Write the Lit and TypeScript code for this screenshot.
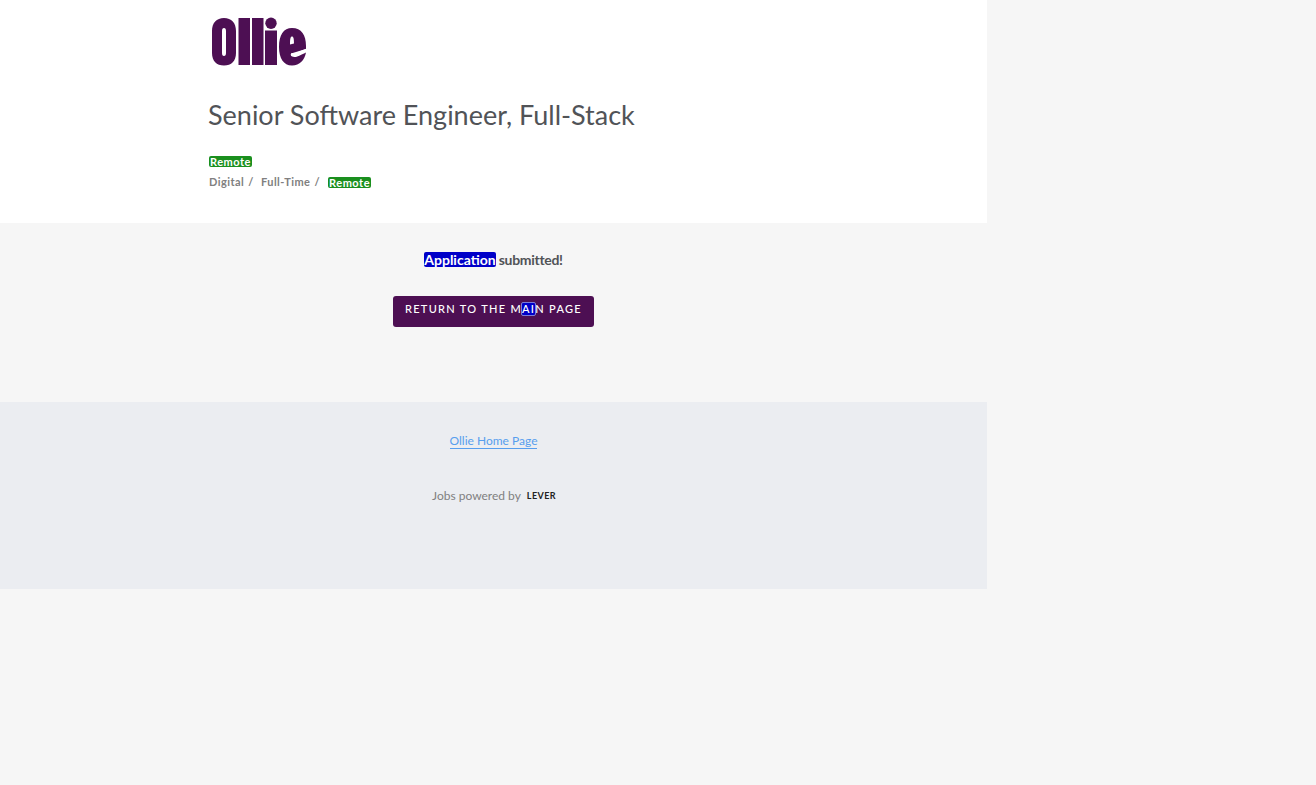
import { LitElement, html, css, svg } from 'lit';
import { customElement } from 'lit/decorators.js';

// logo letters are drawn in page pixels, offset from the svg's corner at (212, 16)
const LOGO = svg`
  <path fill="#4d0f53" fill-rule="evenodd" d="M12 2C19.500 2 24 7 24 15V37C24 45 19.500 49.500 12 49.500C4.500 49.500 0 45 0 37V15C0 7 4.500 2 12 2ZM12 12C10.600 12 10 13 10 15V37C10 39 10.600 40 12 40C13.400 40 14 39 14 37V15C14 13 13.400 12 12 12Z"/>
  <rect x="26.500" y="2" width="11.500" height="47" fill="#4d0f53"/>
  <rect x="40" y="2" width="11.500" height="47" fill="#4d0f53"/>
  <circle cx="59" cy="7.200" r="5.700" fill="#4d0f53"/>
  <rect x="53" y="14.500" width="12" height="34.500" fill="#4d0f53"/>
  <path fill="#4d0f53" fill-rule="evenodd" d="M80 12C89.500 12 94 19 94 30V33L79 37.500C79.500 39.500 80.500 41 82.500 41C85.500 41 88.500 39 94 36.500C92.500 44 88 49.500 80 49.500C71.500 49.500 67 42 67 31C67 19 71.500 12 80 12ZM80 20.500C78.500 20.500 78 23 78 28.500L82 27.500C82 23 81.500 20.500 80 20.500Z"/>
  <path d="M80 39L95 33" stroke="#fff" stroke-width="1.200" fill="none"/>
  <circle cx="80.500" cy="38.800" r="1.800" fill="#fff"/>
`;

@customElement('app-root')
export class AppRoot extends LitElement {
  static styles = css`
    :host {
      display: block;
      min-height: 785px;
      background: #f6f6f6;
      font-family: Lato, "Liberation Sans", sans-serif;
      color: #515357;
    }

    .page {
      width: 987px;
    }

    .header {
      background: #fff;
      height: 223px;
      box-sizing: border-box;
      padding: 16px 0 0 208px;
    }

    .logo {
      display: block;
      width: 100px;
      height: 52px;
      margin-left: 4px;
    }

    h2 {
      margin: 28px 0 0;
      font-size: 27px;
      line-height: 38px;
      font-weight: 400;
      color: #515357;
    }

    .badge {
      display: inline-block;
      background: #1a8f1e;
      color: #fff;
      font-size: 11px;
      line-height: 11px;
      font-weight: 700;
      letter-spacing: 0.5px;
      padding: 0 1px;
      border-radius: 2px;
    }

    .badge-row {
      margin: 20px 0 0 1px;
      height: 14px;
      display: flex;
      align-items: center;
    }

    .cats {
      margin: 7px 0 0 1px;
      display: flex;
      align-items: center;
      font-size: 11px;
      line-height: 14px;
      font-weight: 700;
      letter-spacing: 0.45px;
      color: #808080;
    }

    .cat {
      margin-right: 7px;
    }

    .slash {
      margin-left: 1px;
    }

    .cats .badge {
      margin-left: 1px;
    }

    .done {
      height: 179px;
      box-sizing: border-box;
      padding-top: 28px;
      display: flex;
      flex-direction: column;
      align-items: center;
    }

    .done p {
      margin: 0;
      font-size: 14px;
      line-height: 18px;
      font-weight: 700;
      color: #515357;
      letter-spacing: -0.3px;
    }

    .hl {
      display: inline-block;
      background: #0000c8;
      color: #fff;
      line-height: 15px;
      letter-spacing: 0;
      border-radius: 2px;
    }

    .return {
      margin-top: 27px;
      width: 201px;
      height: 31px;
      box-sizing: border-box;
      padding-top: 5px;
      background: #4d0f53;
      border-radius: 3px;
      color: #fff;
      font-size: 11px;
      line-height: 16px;
      font-weight: 500;
      letter-spacing: 1.3px;
      text-align: center;
      text-decoration: none;
      white-space: nowrap;
    }

    .return .hl {
      line-height: 12px;
      letter-spacing: 1.3px;
      border-radius: 1px;
      outline: 1px solid #7a7ad8;
    }

    .footer {
      background: #ebedf1;
      height: 187px;
      box-sizing: border-box;
      padding-top: 32px;
      display: flex;
      flex-direction: column;
      align-items: center;
      font-size: 12px;
      line-height: 16px;
    }

    .footer a {
      color: #579eee;
      text-decoration: none;
      border-bottom: 1px solid #579eee;
      line-height: 14px;
    }

    .powered {
      margin: 39px 0 0 1px;
      display: flex;
      align-items: center;
      color: #808080;
    }

    .lever {
      margin-left: 6px;
      font-size: 9px;
      font-weight: 700;
      letter-spacing: 0.4px;
      color: #222;
    }
  `;

  render() {
    return html`
      <div class="page">
        <div class="header">
          <svg class="logo" viewBox="0 0 100 52">${LOGO}</svg>
          <h2>Senior Software Engineer, Full-Stack</h2>
          <div class="badge-row"><span class="badge">Remote</span></div>
          <div class="cats">
            <span class="cat">Digital<span class="slash"> /</span></span>
            <span class="cat">Full-Time<span class="slash"> /</span></span>
            <span class="badge">Remote</span>
          </div>
        </div>
        <div class="done">
          <p><span class="hl">Application</span> submitted!</p>
          <a class="return" href="#">RETURN TO THE M<span class="hl">AI</span>N PAGE</a>
        </div>
        <div class="footer">
          <a href="#">Ollie Home Page</a>
          <div class="powered">Jobs powered by <span class="lever">LEVER</span></div>
        </div>
      </div>
    `;
  }
}
